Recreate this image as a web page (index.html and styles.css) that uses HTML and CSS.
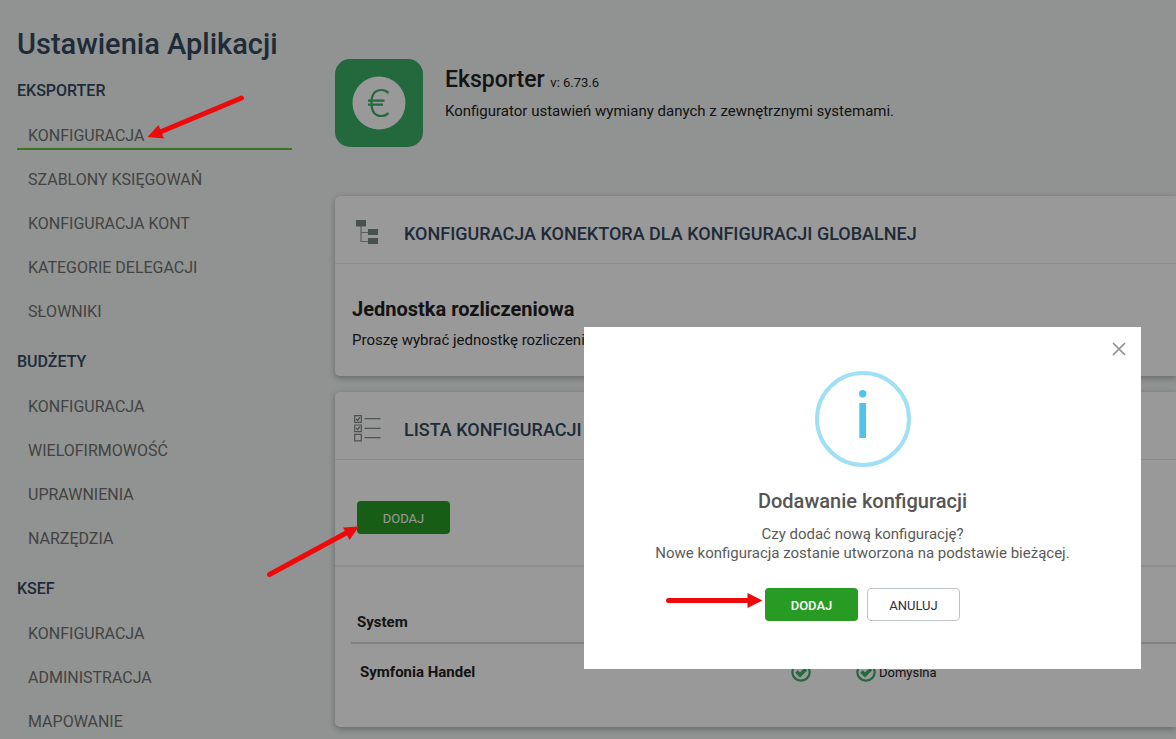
FILE: index.html
```html
<!DOCTYPE html>
<html lang="pl">
<head>
<meta charset="utf-8">
<meta name="viewport" content="width=device-width, initial-scale=1">
<title>Ustawienia Aplikacji</title>
<link rel="stylesheet" href="styles.css">
</head>
<body>
<div class="page">
  <nav class="sidebar">
    <h1 class="sidebar-title">Ustawienia Aplikacji</h1>
    <h2 class="group-title">EKSPORTER</h2>
    <ul class="menu">
      <li><a class="menu-link active" href="#">KONFIGURACJA</a></li>
      <li><a class="menu-link" href="#">SZABLONY KSIĘGOWAŃ</a></li>
      <li><a class="menu-link" href="#">KONFIGURACJA KONT</a></li>
      <li><a class="menu-link" href="#">KATEGORIE DELEGACJI</a></li>
      <li><a class="menu-link" href="#">SŁOWNIKI</a></li>
    </ul>
    <h2 class="group-title">BUDŻETY</h2>
    <ul class="menu">
      <li><a class="menu-link" href="#">KONFIGURACJA</a></li>
      <li><a class="menu-link" href="#">WIELOFIRMOWOŚĆ</a></li>
      <li><a class="menu-link" href="#">UPRAWNIENIA</a></li>
      <li><a class="menu-link" href="#">NARZĘDZIA</a></li>
    </ul>
    <h2 class="group-title">KSEF</h2>
    <ul class="menu">
      <li><a class="menu-link" href="#">KONFIGURACJA</a></li>
      <li><a class="menu-link" href="#">ADMINISTRACJA</a></li>
      <li><a class="menu-link" href="#">MAPOWANIE</a></li>
    </ul>
  </nav>

  <main class="content">
    <header class="app-header">
      <svg class="app-logo" viewBox="0 0 88 88" aria-hidden="true">
        <rect width="88" height="88" rx="15" fill="#3cad67"/>
        <circle cx="44" cy="44" r="26.5" fill="#fff"/>
        <path d="M52.500 34.500V33C50.500 31.500 48.500 31 46.500 31C39.500 31 36.500 36.500 36.500 44S39.500 57 46.500 57C48.500 57 50.500 56.500 52.500 55V53.500M33 41.700H49.500M33 45.700H48" fill="none" stroke="#3cad67" stroke-width="2.200"/>
      </svg>
      <div class="app-text">
        <h2 class="app-name">Eksporter <small class="version">v: 6.73.6</small></h2>
        <p class="app-desc">Konfigurator ustawień wymiany danych z zewnętrznymi systemami.</p>
      </div>
    </header>

    <section class="card">
      <div class="card-head">
        <svg class="card-icon" viewBox="0 0 30 30" aria-hidden="true">
          <path d="M7 8V25.500H14M7 16.500H14" fill="none" stroke="#999d9f" stroke-width="1.200"/>
          <path d="M2 4h10v6.500H2zM14 13h10v6H14zM14 22h10v6H14z" fill="#7b8686"/>
        </svg>
        <h3 class="card-title">KONFIGURACJA KONEKTORA DLA KONFIGURACJI GLOBALNEJ</h3>
      </div>
      <div class="card-body">
        <h4 class="unit-title">Jednostka rozliczeniowa</h4>
        <p class="unit-text">Proszę wybrać jednostkę rozliczeniową</p>
      </div>
    </section>

    <section class="card">
      <div class="card-head">
        <svg class="card-icon" viewBox="0 0 30 30" aria-hidden="true">
          <path d="M.7 3.700h6.600v6.600H.7zM.7 13h6.600v6.600H.7zM.7 22.300h6.600v6.600H.7z" fill="none" stroke="#848888" stroke-width="1.200"/>
          <path d="M2.300 6.800L3.600 8.300L6 5.300M2.300 16.100L3.600 17.600L6 14.600" fill="none" stroke="#707474" stroke-width="1.200"/>
          <path d="M10.500 6.700H26.500M10.500 16.300H26.500M10.500 25.700H26.500" stroke="#888c8c" stroke-width="1.200"/>
        </svg>
        <h3 class="card-title">LISTA KONFIGURACJI</h3>
      </div>
      <div class="toolbar"><button class="btn btn-primary" type="button">DODAJ</button></div>
      <div class="list">
        <table class="systems">
          <thead><tr><th class="col-system" scope="col">System</th><th class="col-check"></th><th></th></tr></thead>
          <tbody>
            <tr>
              <td class="system-name">Symfonia Handel</td>
              <td><svg class="check" viewBox="0 0 20 20" aria-hidden="true"><circle cx="10" cy="10" r="8.700" fill="none" stroke="#3cad67" stroke-width="2.200"/><path d="M5.500 9.500L9 13L15 7" fill="none" stroke="#3cad67" stroke-width="3.400"/></svg></td>
              <td><span class="default"><svg class="check" viewBox="0 0 20 20" aria-hidden="true"><circle cx="10" cy="10" r="8.700" fill="none" stroke="#3cad67" stroke-width="2.200"/><path d="M5.500 9.500L9 13L15 7" fill="none" stroke="#3cad67" stroke-width="3.400"/></svg>Domyślna</span></td>
            </tr>
          </tbody>
        </table>
      </div>
    </section>
  </main>
</div>

<div class="overlay">
  <div class="modal" role="dialog" aria-modal="true" aria-labelledby="modal-title">
    <button class="close" type="button" aria-label="Zamknij">
      <svg class="close-icon" viewBox="0 0 14 14" aria-hidden="true"><path d="M1 1L13 13M13 1L1 13" stroke="#8e8e8e" stroke-width="1.700"/></svg>
    </button>
    <svg class="info" viewBox="0 0 96 96" aria-hidden="true">
      <circle cx="48" cy="48" r="46" fill="none" stroke="#a0e0f5" stroke-width="4"/>
      <circle cx="47.700" cy="22.700" r="3.700" fill="#4fc3ea"/>
      <path d="M44.300 32h6.700v35h-6.700z" fill="#4fc3ea"/>
    </svg>
    <h2 class="modal-title" id="modal-title">Dodawanie konfiguracji</h2>
    <p class="modal-text">Czy dodać nową konfigurację?<br>Nowe konfiguracja zostanie utworzona na podstawie bieżącej.</p>
    <div class="modal-actions">
      <button class="btn btn-primary btn-strong" type="button">DODAJ</button>
      <button class="btn btn-outline" type="button">ANULUJ</button>
    </div>
  </div>
</div>

<svg class="arrows" width="1176" height="739" viewBox="0 0 1176 739" aria-hidden="true">
  <g stroke="#ee0a0a" stroke-width="5" stroke-linecap="round">
    <path d="M241.500 98L159 132.500"/>
    <path d="M269.500 574.500L348 532"/>
    <path d="M668.500 600.500H750"/>
  </g>
  <path d="M147.500 137L158.500 125L164 138.500zM359 526.500L349.500 540L343 527.500zM762.500 600.500L747.500 593V608z" fill="#ee0a0a"/>
</svg>
</body>
</html>
```

FILE: styles.css
```css
* { box-sizing: border-box; }

body {
  margin: 0;
  background: #f1f5f2;
  color: #222;
  font-family: Roboto, "Liberation Sans", sans-serif;
  font-size: 15px;
}

h1, h2, h3, h4, p, ul { margin: 0; padding: 0; }

.page {
  display: flex;
  height: 100vh;
  overflow: hidden;
}

/* Sidebar */
.sidebar {
  flex: 0 0 335px;
  padding: 24px 43px 0 17px;
}

.sidebar-title {
  color: #34495e;
  font-size: 29px;
  font-weight: 500;
  line-height: 40px;
  white-space: nowrap;
}

.group-title {
  padding-top: 3px;
  color: #34495e;
  font-size: 16px;
  font-weight: 500;
  line-height: 47px;
}

.menu + .group-title { padding-top: 4px; }

.menu { list-style: none; }

.menu-link {
  display: block;
  margin-bottom: 8px;
  padding: 12px 11px 2px;
  border-bottom: 2px solid transparent;
  color: #707070;
  font-size: 16px;
  line-height: 20px;
  text-decoration: none;
}

.menu-link.active { border-bottom-color: #68c03c; }

/* Main column */
.content {
  flex: 1;
  min-width: 0;
  padding-top: 59px;
}

.app-header {
  display: flex;
  gap: 22px;
  margin-bottom: 49px;
}

.app-logo { width: 88px; height: 88px; }

.app-text { padding-top: 5px; }

.app-name {
  font-size: 23px;
  font-weight: 500;
  line-height: 32px;
}

.version { font-size: 13px; font-weight: 400; }

.app-desc { padding-top: 2px; line-height: 20px; }

.card {
  margin-bottom: 16px;
  border-radius: 5px 0 0 5px;
  background: #fff;
  box-shadow: 0 2px 6px rgba(0, 0, 0, 0.3);
}

.card-head {
  display: flex;
  align-items: center;
  gap: 20px;
  height: 68px;
  padding: 8px 19px 0;
  border-bottom: 1px solid #ececec;
}

.card-icon { flex: none; width: 30px; height: 30px; margin-bottom: 6px; }

.card-title {
  color: #34495e;
  font-size: 18px;
  font-weight: 500;
}

.card-body { padding: 33px 17px 26px; }

.unit-title {
  font-size: 20px;
  font-weight: 700;
  line-height: 24px;
}

.unit-text { padding-top: 9px; line-height: 20px; }

.toolbar {
  padding: 41px 22px 31px;
  border-bottom: 2px solid #ececec;
}

.list { padding: 34px 0 27px 16px; }

.systems {
  width: 100%;
  border-collapse: collapse;
  table-layout: fixed;
  text-align: left;
}

.systems th {
  height: 42px;
  padding: 0 6px;
  border-bottom: 2px solid #d8d8d8;
  font-weight: 700;
}

.systems td { height: 57px; padding: 0; }

.systems .col-system { width: 440px; }
.systems .col-check { width: 65px; }

.systems .system-name { padding-left: 9px; font-weight: 700; }

.check { display: block; width: 20px; height: 20px; }

.default {
  display: flex;
  align-items: center;
  gap: 3px;
  font-size: 13px;
}

/* Buttons */
.btn {
  width: 93px;
  height: 33px;
  padding: 2px 0 0;
  border: 0;
  border-radius: 4px;
  font-family: inherit;
  font-size: 13px;
  display: block;
}

.btn-primary { background: #289b24; color: #fff; }

.btn-strong { font-weight: 500; }

.btn-outline {
  border: 1px solid #c0c4cc;
  background: #fff;
  color: #2c2c44;
}

/* Dialog */
.overlay {
  position: fixed;
  inset: 0;
  display: flex;
  align-items: flex-end;
  justify-content: flex-end;
  padding: 0 35px 70px;
  background: rgba(0, 0, 0, 0.4);
}

.modal {
  position: relative;
  display: flex;
  flex-direction: column;
  align-items: center;
  width: 557px;
  max-width: 100%;
  padding: 44px 24px 48px;
  background: #fff;
  text-align: center;
}

.close {
  position: absolute;
  top: 12px;
  right: 12px;
  display: grid;
  place-items: center;
  width: 20px;
  height: 20px;
  padding: 0;
  border: 0;
  background: none;
}

.close-icon { width: 14px; height: 14px; }

.info { width: 96px; height: 96px; }

.modal-title {
  padding-top: 22px;
  color: #555;
  font-size: 20px;
  font-weight: 500;
  line-height: 24px;
}

.modal-text {
  padding-top: 12px;
  color: #5a5a5a;
  line-height: 19px;
}

.modal-actions {
  display: flex;
  gap: 9px;
  padding-top: 25px;
}

.arrows {
  position: absolute;
  top: 0;
  left: 0;
  pointer-events: none;
}
```
